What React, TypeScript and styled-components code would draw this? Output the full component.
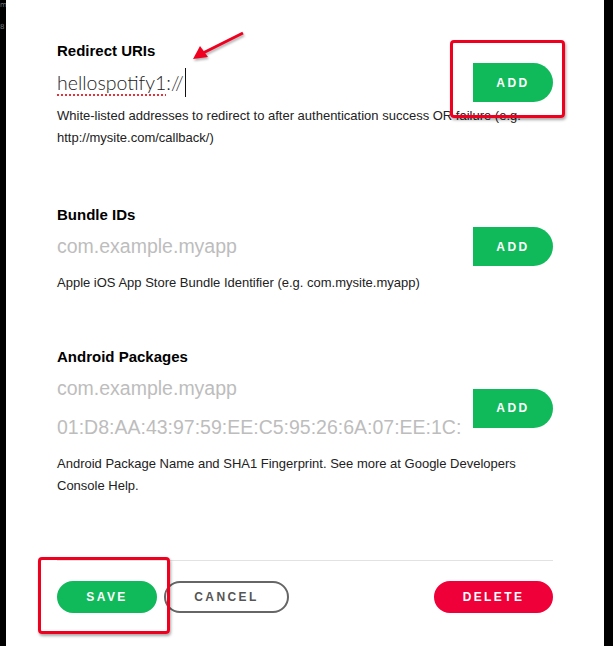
import styled, { createGlobalStyle } from "styled-components";

const GlobalStyle = createGlobalStyle`
  html, body {
    margin: 0;
    padding: 0;
    background: #000;
  }
  body {
    font-family: "Liberation Sans", Arial, sans-serif;
  }
`;

export default function App() {
  return (
    <>
      <GlobalStyle />
      <Screen>
        <Gutter>
          <GutterGlyph>m</GutterGlyph>
          <GutterGlyph>8</GutterGlyph>
        </Gutter>
        <Sheet>
          <Section>
            <Label>Redirect URIs</Label>
            <FieldRow>
              <Inputs>
                <InputLine>
                  <Typed>
                    <Misspelled>hellospotify1</Misspelled>://
                  </Typed>
                  <Caret />
                </InputLine>
              </Inputs>
              <AddButton>ADD</AddButton>
            </FieldRow>
            <Help>
              White-listed addresses to redirect to after authentication success OR failure (e.g.
              http://mysite.com/callback/)
            </Help>
          </Section>

          <Section $gap={56}>
            <Label>Bundle IDs</Label>
            <FieldRow>
              <Inputs>
                <InputLine>
                  <Placeholder>com.example.myapp</Placeholder>
                </InputLine>
              </Inputs>
              <AddButton>ADD</AddButton>
            </FieldRow>
            <Help $tight>Apple iOS App Store Bundle Identifier (e.g. com.mysite.myapp)</Help>
          </Section>

          <Section $gap={53}>
            <Label>Android Packages</Label>
            <FieldRow>
              <Inputs>
                <InputLine>
                  <Placeholder>com.example.myapp</Placeholder>
                </InputLine>
                <InputLine>
                  <Placeholder>01:D8:AA:43:97:59:EE:C5:95:26:6A:07:EE:1C:</Placeholder>
                </InputLine>
              </Inputs>
              <AddButton>ADD</AddButton>
            </FieldRow>
            <Help $tight>
              Android Package Name and SHA1 Fingerprint. See more at Google Developers Console
              Help.
            </Help>
          </Section>

          <Divider />

          <Footer>
            <PillButton $variant="save">SAVE</PillButton>
            <PillButton $variant="cancel">CANCEL</PillButton>
            <Spacer />
            <PillButton $variant="delete">DELETE</PillButton>
          </Footer>

          <Highlight style={{ left: 444, top: 40, width: 115, height: 78 }} />
          <Highlight style={{ left: 32, top: 557, width: 132, height: 77 }} />
          <Arrow width="60" height="40" viewBox="0 0 60 40">
            <line x1="54" y1="4" x2="14" y2="24" stroke="#f0001f" strokeWidth="3" />
            <polygon points="4,30 11,17 19,28" fill="#f0001f" />
          </Arrow>
        </Sheet>
        <Edge />
      </Screen>
    </>
  );
}

const Screen = styled.div`
  display: flex;
  width: 613px;
  height: 646px;
  overflow: hidden;
`;

const Gutter = styled.div`
  width: 6px;
  background: #000;
  display: flex;
  flex-direction: column;
  align-items: flex-start;
  overflow: hidden;
`;

const GutterGlyph = styled.span`
  font-family: "DejaVu Sans", sans-serif;
  font-size: 7px;
  line-height: 10px;
  color: #777;
  &:nth-child(2) {
    margin-top: 12px;
  }
`;

const Sheet = styled.div`
  position: relative;
  flex: 1;
  background: #fff;
  padding: 41px 51px 0 51px;
`;

const Edge = styled.div`
  width: 9px;
  background: #000;
`;

const Section = styled.div<{ $gap?: number }>`
  margin-top: ${(p) => p.$gap ?? 0}px;
`;

const Label = styled.div`
  font-size: 15px;
  font-weight: 700;
  line-height: 20px;
  color: #000;
  margin-bottom: 2px;
`;

const FieldRow = styled.div`
  display: flex;
  align-items: center;
`;

const Inputs = styled.div`
  flex: 1;
  display: flex;
  flex-direction: column;
`;

const InputLine = styled.div`
  height: 39px;
  display: flex;
  align-items: center;
  font-size: 19.5px;
  white-space: nowrap;
`;

const Typed = styled.span`
  font-family: "Lato", "Liberation Sans", sans-serif;
  font-weight: 300;
  color: #222;
`;

const Misspelled = styled.span`
  text-decoration: underline dotted #e2323c;
  text-underline-offset: 4px;
  text-decoration-thickness: 2px;
`;

const Caret = styled.span`
  display: inline-block;
  width: 1px;
  height: 29px;
  background: #111;
  margin-left: 1px;
`;

const Placeholder = styled.span`
  color: #bdbdbd;
`;

const AddButton = styled.div`
  width: 80px;
  height: 39px;
  background: #10ba5a;
  border-radius: 0 20px 20px 0;
  color: #fff;
  font-size: 12px;
  font-weight: 700;
  letter-spacing: 2.5px;
  display: flex;
  align-items: center;
  justify-content: center;
`;

const Help = styled.div<{ $tight?: boolean }>`
  margin-top: ${(p) => (p.$tight ? 6 : 3)}px;
  font-size: 13px;
  line-height: 22px;
  color: #222;
`;

const Divider = styled.div`
  height: 1px;
  background: #e2e2e2;
  margin-top: 63px;
`;

const Footer = styled.div`
  display: flex;
  align-items: center;
  gap: 7px;
  margin-top: 20px;
`;

const Spacer = styled.div`
  flex: 1;
`;

const variants = {
  save: { bg: "#10ba5a", fg: "#fff", border: "#10ba5a", width: 100 },
  cancel: { bg: "#fff", fg: "#555", border: "#666", width: 125 },
  delete: { bg: "#f00038", fg: "#fff", border: "#f00038", width: 119 },
};

const PillButton = styled.div<{ $variant: keyof typeof variants }>`
  box-sizing: border-box;
  width: ${(p) => variants[p.$variant].width}px;
  height: 32px;
  border-radius: 16px;
  border: 2px solid ${(p) => variants[p.$variant].border};
  background: ${(p) => variants[p.$variant].bg};
  color: ${(p) => variants[p.$variant].fg};
  font-size: 12px;
  font-weight: 700;
  letter-spacing: 2.4px;
  display: flex;
  align-items: center;
  justify-content: center;
`;

const Highlight = styled.div`
  position: absolute;
  box-sizing: border-box;
  border: 3px solid #f0001f;
  border-radius: 4px;
  box-shadow: 1px 2px 3px rgba(0, 0, 0, 0.35);
`;

const Arrow = styled.svg`
  position: absolute;
  left: 183px;
  top: 29px;
  filter: drop-shadow(1px 2px 1px rgba(0, 0, 0, 0.3));
`;
